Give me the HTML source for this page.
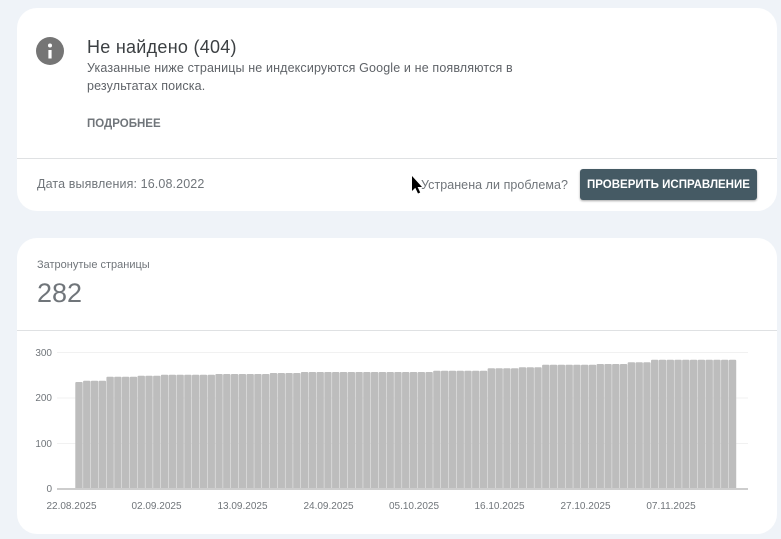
<!DOCTYPE html>
<html lang="ru"><head><meta charset="utf-8"><style>
html,body{margin:0;padding:0;width:781px;height:539px;overflow:hidden;background:#eff3f8}
body{position:relative;font-family:"Liberation Sans",sans-serif}
.card{position:absolute;left:17px;width:760px;background:#fff;border-radius:20px}
.t{position:absolute;white-space:nowrap;line-height:1}
.hr{position:absolute;left:17px;width:760px;height:1px;background:#dfe1e3}
svg{position:absolute;left:0;top:0}
#b rect{width:7.4px;height:140px;rx:1px;fill:#bdbdbd}
.l{font-size:10px;fill:#70757a;font-family:"Liberation Sans",sans-serif}
.btn{position:absolute;left:580px;top:169px;width:177px;height:31px;background:#455a64;border-radius:3px;box-shadow:0 1px 2px rgba(0,0,0,.35)}
</style></head><body>
<div class="card" style="top:8px;height:203px"></div>
<div class="card" style="top:238px;height:296px"></div>
<div class="hr" style="top:158px"></div>
<div class="hr" style="top:330px"></div>

<div class="t" style="left:87px;top:38px;font-size:18px;letter-spacing:.27px;color:#3c4043">Не найдено (404)</div>
<div class="t" style="left:87px;top:62px;font-size:12.5px;letter-spacing:.14px;color:#5f6368">Указанные ниже страницы не индексируются Google и не появляются в</div>
<div class="t" style="left:87px;top:80px;font-size:12.5px;letter-spacing:.14px;color:#5f6368">результатах поиска.</div>
<div class="t" style="left:87px;top:119px;font-size:11.5px;font-weight:bold;color:#70757a">ПОДРОБНЕЕ</div>
<div class="t" style="left:37px;top:178px;font-size:12.5px;letter-spacing:.12px;color:#70757a">Дата выявления: 16.08.2022</div>
<div class="t" style="left:421px;top:179px;font-size:12.5px;letter-spacing:.05px;color:#70757a">Устранена ли проблема?</div>
<div class="btn"></div>
<div class="t" style="left:587px;top:180px;font-size:11.5px;font-weight:bold;color:#fff">ПРОВЕРИТЬ ИСПРАВЛЕНИЕ</div>
<div class="t" style="left:37px;top:260px;font-size:11px;color:#70757a">Затронутые страницы</div>
<div class="t" style="left:37px;top:280px;font-size:27px;color:#70757a">282</div>

<svg width="781" height="539" viewBox="0 0 781 539">
<circle cx="50" cy="51" r="14" fill="#757575"/>
<rect x="48.4" y="50" width="3.2" height="8.5" fill="#fff"/>
<circle cx="50" cy="45.5" r="2" fill="#fff"/>
<path d="M412 176V191L415.3 187.7L418 193.5L420.2 192.5L417.6 187H422Z" fill="#000"/>
<g fill="#f1f1f1"><rect x="57" y="352" width="691" height="1"/><rect x="57" y="397.5" width="691" height="1"/><rect x="57" y="443" width="691" height="1"/></g>
<clipPath id="c"><rect x="0" y="340" width="781" height="149"/></clipPath>
<g id="b" clip-path="url(#c)">
<rect x="75.3" y="382"/>
<rect x="83.08" y="380.7"/><rect x="90.86" y="380.7"/><rect x="98.64" y="380.7"/>
<rect x="106.42" y="376.7"/><rect x="114.2" y="376.7"/><rect x="121.98" y="376.7"/><rect x="129.76" y="376.7"/>
<rect x="137.54" y="375.7"/><rect x="145.32" y="375.7"/><rect x="153.1" y="375.7"/>
<rect x="160.88" y="374.7"/><rect x="168.66" y="374.7"/><rect x="176.44" y="374.7"/><rect x="184.22" y="374.7"/><rect x="192" y="374.7"/><rect x="199.78" y="374.7"/><rect x="207.56" y="374.7"/>
<rect x="215.34" y="374"/><rect x="223.12" y="374"/><rect x="230.9" y="374"/><rect x="238.68" y="374"/><rect x="246.46" y="374"/><rect x="254.24" y="374"/><rect x="262.02" y="374"/>
<rect x="269.8" y="373"/><rect x="277.58" y="373"/><rect x="285.36" y="373"/><rect x="293.14" y="373"/>
<rect x="300.92" y="372"/><rect x="308.7" y="372"/><rect x="316.48" y="372"/><rect x="324.26" y="372"/><rect x="332.04" y="372"/><rect x="339.82" y="372"/><rect x="347.6" y="372"/><rect x="355.38" y="372"/><rect x="363.16" y="372"/><rect x="370.94" y="372"/><rect x="378.72" y="372"/><rect x="386.5" y="372"/><rect x="394.28" y="372"/><rect x="402.06" y="372"/><rect x="409.84" y="372"/><rect x="417.62" y="372"/><rect x="425.4" y="372"/>
<rect x="433.18" y="370.7"/><rect x="440.96" y="370.7"/><rect x="448.74" y="370.7"/><rect x="456.52" y="370.7"/><rect x="464.3" y="370.7"/><rect x="472.08" y="370.7"/><rect x="479.86" y="370.7"/>
<rect x="487.64" y="368.3"/><rect x="495.42" y="368.3"/><rect x="503.2" y="368.3"/><rect x="510.98" y="368.3"/>
<rect x="518.76" y="367.3"/><rect x="526.54" y="367.3"/><rect x="534.32" y="367.3"/>
<rect x="542.1" y="364.7"/><rect x="549.88" y="364.7"/><rect x="557.66" y="364.7"/><rect x="565.44" y="364.7"/><rect x="573.22" y="364.7"/><rect x="581" y="364.7"/><rect x="588.78" y="364.7"/>
<rect x="596.56" y="364"/><rect x="604.34" y="364"/><rect x="612.12" y="364"/><rect x="619.9" y="364"/>
<rect x="627.68" y="362.3"/><rect x="635.46" y="362.3"/><rect x="643.24" y="362.3"/>
<rect x="651.02" y="359.7"/><rect x="658.8" y="359.7"/><rect x="666.58" y="359.7"/><rect x="674.36" y="359.7"/><rect x="682.14" y="359.7"/><rect x="689.92" y="359.7"/><rect x="697.7" y="359.7"/><rect x="705.48" y="359.7"/><rect x="713.26" y="359.7"/><rect x="721.04" y="359.7"/><rect x="728.82" y="359.7"/>
</g>
<rect x="57" y="488" width="691" height="2" fill="#cdcdcd"/>
<g class="l" text-anchor="end"><text x="52" y="356">300</text><text x="52" y="401">200</text><text x="52" y="447">100</text><text x="52" y="492">0</text></g>
<g class="l" text-anchor="middle">
<text x="71.5" y="509">22.08.2025</text><text x="156.5" y="509">02.09.2025</text><text x="242.5" y="509">13.09.2025</text><text x="328.5" y="509">24.09.2025</text><text x="414" y="509">05.10.2025</text><text x="499.5" y="509">16.10.2025</text><text x="585.5" y="509">27.10.2025</text><text x="671" y="509">07.11.2025</text>
</g>
</svg>
</body></html>
